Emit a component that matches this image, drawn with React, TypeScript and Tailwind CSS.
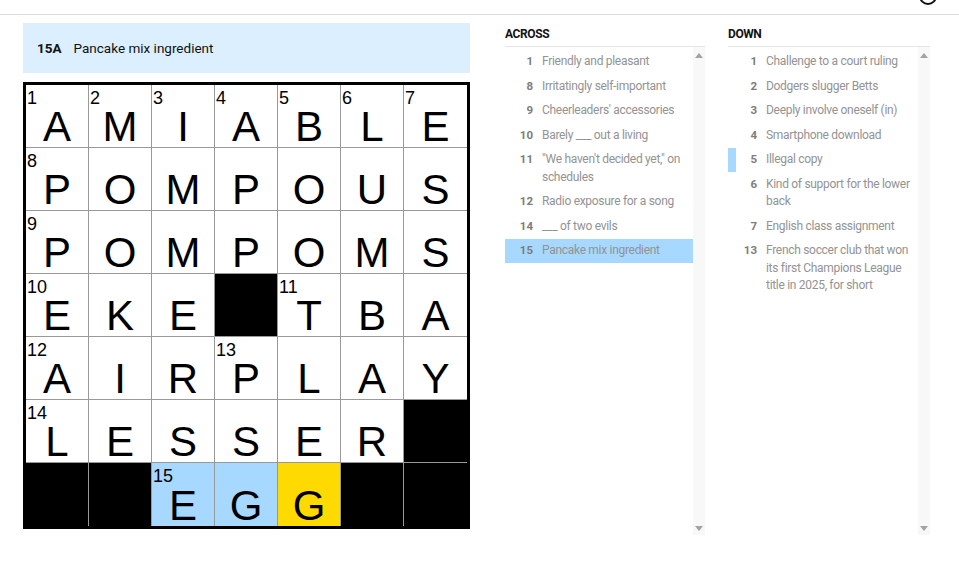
import React from "react";

const GRID = ["AMIABLE", "POMPOUS", "POMPOMS", "EKE#TBA", "AIRPLAY", "LESSER#", "##EGG##"];
const NUMS: Record<string, number> = {
  "0-0": 1, "0-1": 2, "0-2": 3, "0-3": 4, "0-4": 5, "0-5": 6, "0-6": 7,
  "1-0": 8, "2-0": 9, "3-0": 10, "3-4": 11, "4-0": 12, "4-3": 13, "5-0": 14, "6-2": 15,
};

const ACROSS: [number, string][] = [
  [1, "Friendly and pleasant"],
  [8, "Irritatingly self-important"],
  [9, "Cheerleaders' accessories"],
  [10, "Barely ___ out a living"],
  [11, "\"We haven't decided yet,\" on schedules"],
  [12, "Radio exposure for a song"],
  [14, "___ of two evils"],
  [15, "Pancake mix ingredient"],
];

const DOWN: [number, string][] = [
  [1, "Challenge to a court ruling"],
  [2, "Dodgers slugger Betts"],
  [3, "Deeply involve oneself (in)"],
  [4, "Smartphone download"],
  [5, "Illegal copy"],
  [6, "Kind of support for the lower back"],
  [7, "English class assignment"],
  [13, "French soccer club that won its first Champions League title in 2025, for short"],
];

function Cell({ r, c, ch }: { r: number; c: number; ch: string }) {
  const black = ch === "#";
  const num = NUMS[`${r}-${c}`];
  let bg = "bg-white";
  if (black) bg = "bg-black";
  else if (r === 6 && c === 4) bg = "bg-[#ffda00]";
  else if (r === 6 && (c === 2 || c === 3)) bg = "bg-[#a7d8ff]";
  const br = c < 6 ? "border-r" : "";
  const bb = r < 6 ? "border-b" : "";
  return (
    <div className={`relative w-[63px] h-[63px] border-[#999999] ${br} ${bb} ${bg}`}>
      {num !== undefined && (
        <span className="absolute left-[1px] top-[4px] text-[18px] leading-[18px] text-black">{num}</span>
      )}
      {!black && (
        <span className="absolute left-0 right-0 bottom-[-1px] text-center text-[42px] leading-[42px] text-black">
          {ch}
        </span>
      )}
    </div>
  );
}

function Arrow({ up }: { up?: boolean }) {
  return (
    <svg width="8" height="5" viewBox="0 0 8 5">
      {up ? <polygon points="0,5 8,5 4,0" fill="#a3a3a3" /> : <polygon points="0,0 8,0 4,5" fill="#a3a3a3" />}
    </svg>
  );
}

function ClueColumn({
  title,
  clues,
  width,
  numW,
  active,
  cross,
}: {
  title: string;
  clues: [number, string][];
  width: string;
  numW: string;
  active?: number;
  cross?: number;
}) {
  return (
    <div className={width}>
      <div className="pt-[3px] pb-[4px] border-b border-[#e6e6e6] text-[12px] leading-[16px] font-bold text-[#121212] tracking-[-0.4px]">
        {title}
      </div>
      <div className="flex h-[488px]">
        <ul className="flex-1 pt-[2.5px]">
          {clues.map(([n, t]) => (
            <li
              key={n}
              className={`flex border-l-[8px] py-[3.5px] ${n === active ? "bg-[#a7d8ff] border-transparent" : n === cross ? "border-[#a7d8ff]" : "border-transparent"}`}
            >
              <span className={`${numW} shrink-0 text-right text-[11.5px] leading-[17.5px] font-bold text-[#7c7c7c]`}>{n}</span>
              <span className="ml-[9px] pr-[5px] flex-1 text-[12px] leading-[17.5px] tracking-[-0.3px] text-[#939393]">
                {t}
              </span>
            </li>
          ))}
        </ul>
        <div className="w-[12px] bg-[#f8f8f8] flex flex-col justify-between items-center pt-[6px] pb-[4px]">
          <Arrow up />
          <Arrow />
        </div>
      </div>
    </div>
  );
}

export default function App() {
  return (
    <div
      className="w-[959px] h-[562px] bg-white overflow-hidden"
      style={{ fontFamily: "Roboto, 'Liberation Sans', sans-serif" }}
    >
      <div className="h-[15px] border-b border-[#dcdcdc] flex justify-end pr-[21px] overflow-hidden">
        <svg width="20" height="20" viewBox="0 0 20 20" className="-mt-[14px] shrink-0">
          <circle cx="10" cy="10" r="8" fill="none" stroke="#121212" strokeWidth="2" />
          <line x1="10" y1="9" x2="10" y2="14" stroke="#121212" strokeWidth="2" />
        </svg>
      </div>
      <div className="flex pt-[8px] pl-[23px]">
        <div className="w-[447px] flex flex-col gap-[9px]">
          <div className="h-[50px] bg-[#dcefff] flex items-center pl-[14px] text-[#121212]">
            <span className="text-[13.5px] font-bold">15A</span>
            <span className="ml-[12px] text-[13.5px]">Pancake mix ingredient</span>
          </div>
          <div
            className="border-[3px] border-black grid grid-cols-7 w-[447px]"
            style={{ fontFamily: "'Liberation Sans', Arial, sans-serif" }}
          >
            {GRID.map((row, r) => row.split("").map((ch, c) => <Cell key={`${r}-${c}`} r={r} c={c} ch={ch} />))}
          </div>
        </div>
        <div className="ml-[35px] flex gap-[23px]">
          <ClueColumn title="ACROSS" clues={ACROSS} width="w-[200px]" numW="w-[20px]" active={15} />
          <ClueColumn title="DOWN" clues={DOWN} width="w-[202px]" numW="w-[21px]" cross={5} />
        </div>
      </div>
    </div>
  );
}
